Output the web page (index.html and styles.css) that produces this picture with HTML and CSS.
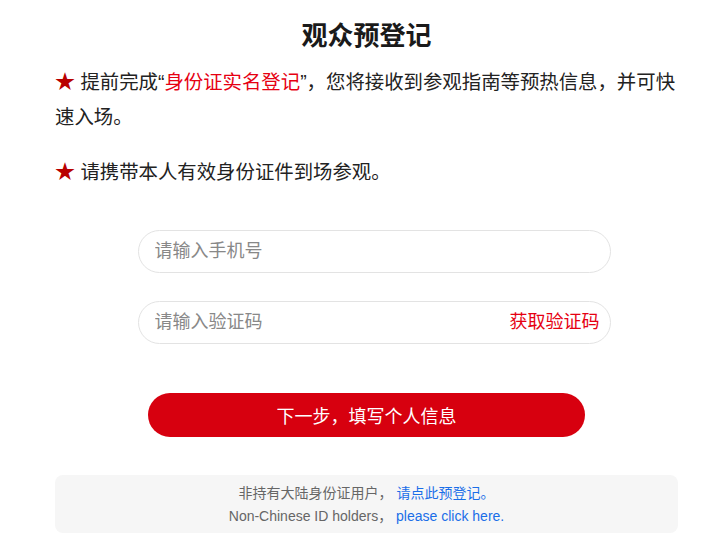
FILE: index.html
```html
<!DOCTYPE html>
<html lang="zh-CN">
<head>
  <meta charset="UTF-8" />
  <meta name="viewport" content="width=device-width, initial-scale=1.0"/>
  <title>观众预登记</title>
  <link rel="stylesheet" href="styles.css">
</head>
<body>

  <div class="container">
    <h1>观众预登记</h1>

    <p class="notice"><span class="star">★</span> 提前完成“<span class="hl">身份证实名登记</span>”，您将接收到参观指南等预热信息，并可快速入场。</p>
    <p class="notice"><span class="star">★</span> 请携带本人有效身份证件到场参观。</p>

    <form class="form" action="#" method="POST">
      <div class="field">
        <input type="tel" name="phone" placeholder="请输入手机号">
      </div>
      <div class="field">
        <input type="text" name="code" placeholder="请输入验证码">
        <a href="#" class="get-code">获取验证码</a>
      </div>
      <button type="submit">下一步，填写个人信息</button>
    </form>

    <div class="foreign">
      <p>非持有大陆身份证用户， <a href="#">请点此预登记。</a></p>
      <p class="en">Non-Chinese ID holders， <a href="#">please click here.</a></p>
    </div>
  </div>

</body>
</html>
```

FILE: styles.css
```css
body {
  margin: 0;
  font-family: "Liberation Sans", "Noto Sans CJK SC", sans-serif;
  background: #fff;
  color: #222;
}
.container {
  width: 623px;
  margin: 0 0 0 55px;
  padding-top: 18px;
}
h1 {
  margin: 0;
  font-size: 26px;
  line-height: 36px;
  font-weight: bold;
  text-align: center;
  color: #1a1a1a;
}
.notice {
  margin: 11px 0 20px;
  font-size: 19.4px;
  line-height: 35px;
}
.notice + .notice {
  margin-top: 0;
}
.star {
  font-size: 20px;
  color: #b80000;
}
.hl {
  color: #e60012;
}
.form {
  display: flex;
  flex-direction: column;
  align-items: center;
  padding-top: 20px;
}
.field {
  position: relative;
  width: 473px;
  height: 43px;
  margin-left: 15px;
  margin-bottom: 28px;
}
.field input {
  box-sizing: border-box;
  width: 100%;
  height: 100%;
  padding: 0 16px;
  border: 1px solid #e3e3e3;
  border-radius: 22px;
  font-family: inherit;
  font-size: 18px;
  color: #333;
  outline: none;
}
.field input::placeholder {
  color: #888;
}
.get-code {
  position: absolute;
  right: 11px;
  top: 0;
  line-height: 43px;
  font-size: 18px;
  color: #e60012;
  text-decoration: none;
}
button {
  width: 437px;
  height: 44px;
  margin-top: 21px;
  border: none;
  border-radius: 22px;
  background-color: #d7000f;
  color: #fff;
  font-family: inherit;
  font-size: 18px;
  cursor: pointer;
}
.foreign {
  margin-top: 38px;
  padding: 7px 0 5px;
  background: #f6f6f6;
  border-radius: 8px;
  text-align: center;
  font-size: 14px;
  line-height: 23px;
  color: #666;
}
.foreign p {
  margin: 0;
}
.foreign a {
  color: #1a6ee8;
  text-decoration: none;
}
```
